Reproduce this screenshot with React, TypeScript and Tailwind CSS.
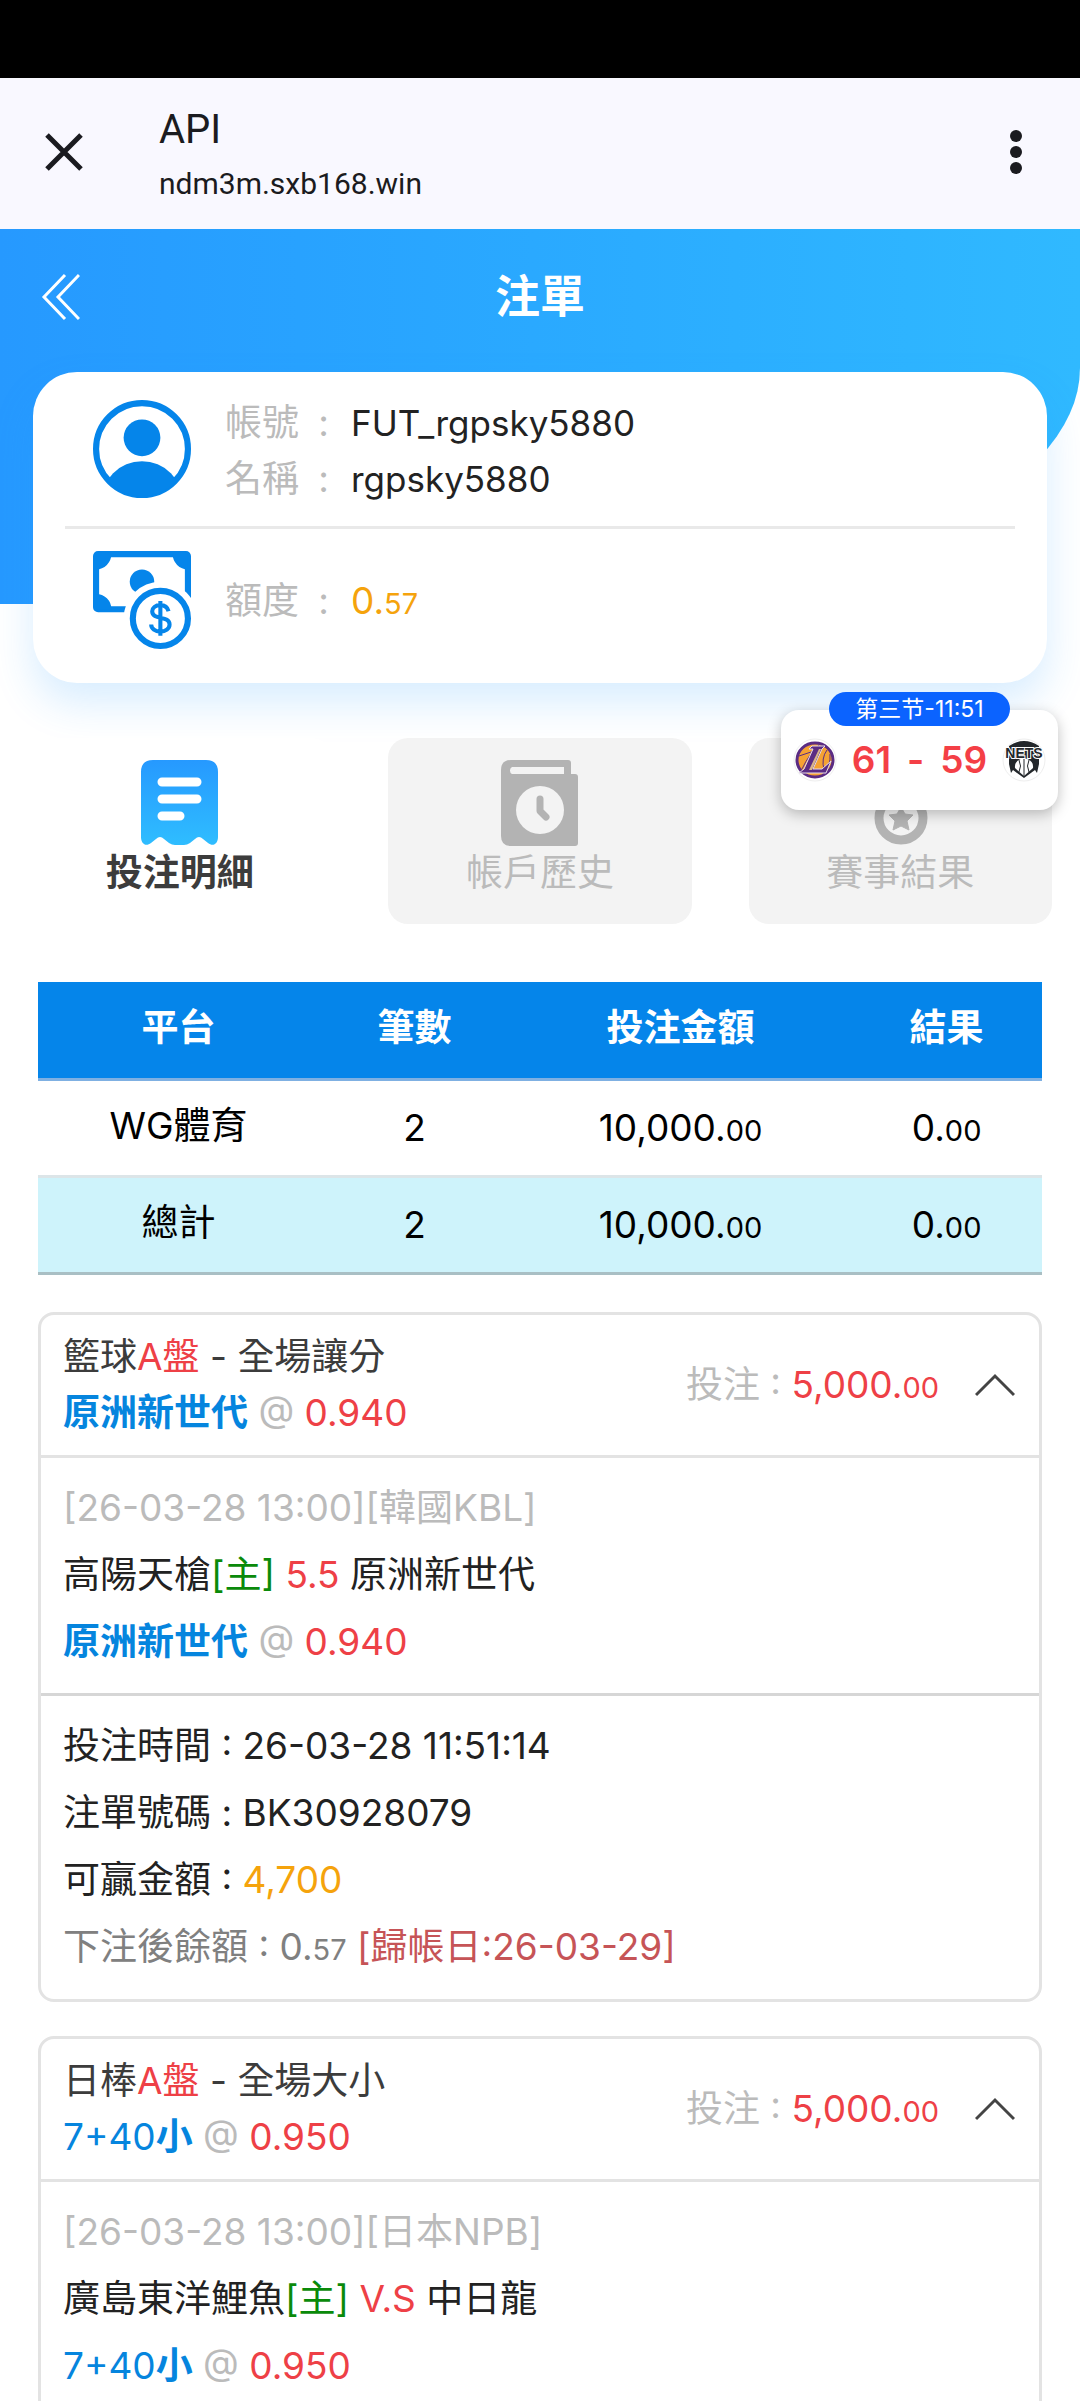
import { useState } from 'react'

interface Receipt {
    placedAt: string
    ticket: string
    toWin: string
    balance: string
    settleDate: string
}

interface Bet {
    id: string
    sport: string
    market: string
    pick: React.ReactNode
    odds: string
    stake: string
    league: string
    home: string
    line: string
    away: string
    receipt?: Receipt
}

const bets: Bet[] = [
    {
        id: 'kbl',
        sport: '籃球',
        market: '全場讓分',
        pick: <b>原洲新世代</b>,
        odds: '0.940',
        stake: '5,000.00',
        league: '[26-03-28 13:00][韓國KBL]',
        home: '高陽天槍',
        line: '5.5',
        away: '原洲新世代',
        receipt: {
            placedAt: '26-03-28 11:51:14',
            ticket: 'BK30928079',
            toWin: '4,700',
            balance: '0.57',
            settleDate: '26-03-29',
        },
    },
    {
        id: 'npb',
        sport: '日棒',
        market: '全場大小',
        pick: <>7+40<b>小</b></>,
        odds: '0.950',
        stake: '5,000.00',
        league: '[26-03-28 13:00][日本NPB]',
        home: '廣島東洋鯉魚',
        line: 'V.S',
        away: '中日龍',
    },
]

const summary = [
    { name: 'WG體育', count: '2', total: false },
    { name: '總計', count: '2', total: true },
]

// Decimals are set smaller than the integer part
function Amount({ value }: { value: string }) {
    const [whole, cents] = value.split('.')
    return (
        <span>
            {whole}.<span className="text-[29px]">{cents}</span>
        </span>
    )
}

function UserIcon() {
    return (
        <svg className="size-[98px] shrink-0" viewBox="0 0 96 96" aria-hidden="true">
            <defs>
                <clipPath id="userClip">
                    <circle cx="48" cy="48" r="46" />
                </clipPath>
            </defs>
            <circle cx="48" cy="48" r="45" fill="none" stroke="#0585ea" strokeWidth="6" />
            <circle cx="48" cy="37" r="18" fill="#0585ea" />
            <circle cx="48" cy="100" r="40" fill="#0585ea" clipPath="url(#userClip)" />
        </svg>
    )
}

function MoneyIcon() {
    return (
        <svg className="size-[98px] shrink-0" viewBox="0 0 96 96" aria-hidden="true">
            <rect x="3" y="3" width="90" height="54" rx="2" fill="#fff" stroke="#0585ea" strokeWidth="6" />
            <g fill="#0585ea">
                <path d="M3 3h15A15 15 0 0 1 3 18zM93 3v15A15 15 0 0 1 78 3zM3 57V42a15 15 0 0 1 15 15z" />
                <circle cx="48" cy="30" r="12" />
            </g>
            <circle cx="66" cy="66" r="36" fill="#fff" />
            <circle cx="66" cy="66" r="27" fill="#fff" stroke="#0585ea" strokeWidth="6" />
            <path
                d="M74 59c-1-4-4-6-8-6-5 0-8 3-8 6 0 9 17 4 17 13 0 4-4 7-9 7s-9-3-9-7M66 49v34"
                fill="none"
                stroke="#0585ea"
                strokeWidth="4"
            />
        </svg>
    )
}

function ReceiptIcon() {
    return (
        <svg className="h-[86px] w-[77px]" viewBox="0 0 77 86" aria-hidden="true">
            <defs>
                <linearGradient id="receiptFill" x1="0" y1="0" x2="0" y2="1">
                    <stop offset="0" stopColor="#2699ff" />
                    <stop offset="1" stopColor="#2fbdff" />
                </linearGradient>
            </defs>
            <path
                d="M12 0h53q12 0 12 12v65c0 7-5 10-10 6l-5-4q-4-4-8 0l-5 4q-3 2-6 2h-9q-3 0-6-2l-5-4q-4-4-8 0l-5 4C5 87 0 84 0 77V12Q0 0 12 0z"
                fill="url(#receiptFill)"
            />
            <path d="M21 22h35M21 39h35M21 56h18" stroke="#fff" strokeWidth="9" strokeLinecap="round" />
        </svg>
    )
}

function HistoryIcon() {
    return (
        <svg className="h-[86px] w-[77px]" viewBox="0 0 77 86" aria-hidden="true">
            <path
                fill="#b3b3b3"
                fillRule="evenodd"
                d="M10 0h57q3 0 3 3v11h4q3 0 3 3v66q0 3-3 3H10Q0 86 0 76V10Q0 0 10 0zm1 7a4 4 0 0 0 0 7h52V7z"
            />
            <circle cx="39" cy="50" r="24" fill="#f3f3f3" />
            <path d="M39 39v12l6 6" fill="none" stroke="#b3b3b3" strokeWidth="7" strokeLinecap="round" strokeLinejoin="round" />
        </svg>
    )
}

function ResultIcon() {
    return (
        <svg className="h-[86px] w-[77px]" viewBox="0 0 77 86" aria-hidden="true">
            <path d="M14 0h16l9 26 9-26h16L50 40H28z" fill="#b3b3b3" />
            <circle cx="39" cy="58" r="22" fill="#f3f3f3" stroke="#b3b3b3" strokeWidth="9" />
            <path d="M39 47l4 7 8 1-6 6 2 9-8-4-8 4 2-9-6-6 8-1z" fill="#b3b3b3" stroke="#b3b3b3" strokeLinejoin="round" />
        </svg>
    )
}

function LakersLogo() {
    return (
        <svg className="size-11" viewBox="0 0 44 44" role="img" aria-label="Lakers">
            <circle cx="22" cy="22" r="21" fill="#fff" stroke="#eee" />
            <ellipse cx="22" cy="22" rx="18" ry="17" fill="#f5a233" stroke="#5b2c83" strokeWidth="3" />
            <path d="M6 18q14-4 26-10M9 31Q16 16 27 6M30 36q8-8 7-20M34 12q-6 8-3 20" fill="none" stroke="#5b2c83" />
            <path d="M19 8h13l-3 3-9 20h9l9-8-5 12H6l5-4 9-20h-4z" fill="#5b2c83" stroke="#e5dbea" />
            <path d="M26 11h2l-9 21h-3z" fill="#d7b48c" />
        </svg>
    )
}

function NetsLogo() {
    return (
        <svg className="size-11" viewBox="0 0 44 44" role="img" aria-label="NETS">
            <circle cx="22" cy="22" r="21" fill="#fff" stroke="#eee" />
            <path d="M7 8q15-10 30 0v18l-2 9-2-3-11 8-11-8-2 3-2-9z" fill="#23272b" />
            <path d="M22 20q10 2 9 10l-9 8-9-8q-1-8 9-10z" fill="#fff" />
            <path d="M22 20v18M17 22q3 6 0 12M27 22q-3 6 0 12" fill="none" stroke="#23272b" />
            <text
                x="22"
                y="20"
                textAnchor="middle"
                fontSize="14"
                fontWeight="700"
                fill="#23272b"
                stroke="#fff"
                strokeWidth="2"
                paintOrder="stroke"
                fontFamily="Liberation Sans, sans-serif"
            >
                NETS
            </text>
        </svg>
    )
}

function PickLine({ bet }: { bet: Bet }) {
    return (
        <p>
            <span className="text-[#0585de]">{bet.pick}</span> <span className="text-[#bbb]">@</span>{' '}
            <span className="text-[#ee4046]">{bet.odds}</span>
        </p>
    )
}

function BetCard({ bet }: { bet: Bet }) {
    const [open, setOpen] = useState(true)

    return (
        <article className="rounded-2xl border-3 border-[#e3e3e3]">
            <div className="flex items-center justify-between py-[14px] pr-6 pl-[22px]">
                <div className="leading-[56px]">
                    <h2 className="text-[#3c3c3c]">
                        {bet.sport}
                        <span className="text-[#ee4046]">A盤</span> - {bet.market}
                    </h2>
                    <PickLine bet={bet} />
                </div>
                <div className="flex items-center gap-9">
                    <p>
                        <span className="text-[#bbb]">投注 : </span>
                        <span className="text-[#ee4046]">
                            <Amount value={bet.stake} />
                        </span>
                    </p>
                    <button type="button" aria-label="展開" aria-expanded={open} onClick={() => setOpen(!open)}>
                        <svg className={open ? 'h-6 w-10' : 'h-6 w-10 rotate-180'} viewBox="0 0 40 24" fill="none">
                            <path d="M1 22L20 3l19 19" stroke="#444" strokeWidth="3" />
                        </svg>
                    </button>
                </div>
            </div>
            {open && (
                <div className="border-t-3 border-[#e3e3e3] px-[22px] pt-4 pb-[18px] leading-[67px]">
                    <p className="text-[#bbb]">{bet.league}</p>
                    <p>
                        {bet.home}
                        <span className="text-[#0a8a0a]">[主]</span> <span className="text-[#ee4046]">{bet.line}</span>{' '}
                        {bet.away}
                    </p>
                    <PickLine bet={bet} />
                </div>
            )}
            {open && bet.receipt && (
                <div className="border-t-3 border-[#d6d6d6] px-[22px] py-4 leading-[67px]">
                    <p>投注時間 : {bet.receipt.placedAt}</p>
                    <p>注單號碼 : {bet.receipt.ticket}</p>
                    <p>
                        可贏金額 : <span className="text-[#f5a30c]">{bet.receipt.toWin}</span>
                    </p>
                    <p className="text-[#808080]">
                        下注後餘額 : <Amount value={bet.receipt.balance} />{' '}
                        <span className="text-[#c65457]">[歸帳日:{bet.receipt.settleDate}]</span>
                    </p>
                </div>
            )}
        </article>
    )
}

export default function App() {
    return (
        <div className="min-h-screen bg-white font-['Inter','Noto_Sans_CJK_TC',sans-serif] text-[37px] text-[#222]">
            <div className="h-[78px] bg-black" />

            {/* Browser bar */}
            <div className="flex h-[151px] items-center bg-[#f9f8ff] px-10 pb-1 font-[Roboto,sans-serif] text-[#1b1b20]">
                <button type="button" aria-label="關閉" className="mr-[75px] ml-1">
                    <svg className="size-10" viewBox="0 0 40 40" fill="none">
                        <path d="M3 3l34 34M37 3L3 37" stroke="#1b1b20" strokeWidth="5" />
                    </svg>
                </button>
                <div className="flex-1 pt-2">
                    <p className="text-[40px] leading-[56px]">API</p>
                    <p className="text-[30px] leading-[52px]">ndm3m.sxb168.win</p>
                </div>
                <button type="button" aria-label="選單" className="mr-4">
                    <svg className="h-12 w-4" viewBox="0 0 16 48" fill="#1b1b20">
                        <circle cx="8" cy="8" r="6" />
                        <circle cx="8" cy="24" r="6" />
                        <circle cx="8" cy="40" r="6" />
                    </svg>
                </button>
            </div>

            {/* Blue header, the account card hangs below it */}
            <header className="h-[375px] rounded-br-[50%_236px] bg-linear-to-r from-[#2699ff] to-[#30b9ff]">
                <div className="grid h-[143px] grid-cols-[1fr_auto_1fr] items-center px-10 pb-2">
                    <a href="#back" aria-label="返回">
                        <svg className="h-12 w-10" viewBox="0 0 40 48" fill="none">
                            <path d="M25 2L4 24l21 22M39 2L18 24l21 22" stroke="#fff" strokeWidth="3" />
                        </svg>
                    </a>
                    <h1 className="text-[45px] font-bold text-white">注單</h1>
                </div>
                <section className="mx-[33px] h-[311px] rounded-[44px] bg-white px-8 shadow-[0_20px_40px_rgba(38,153,255,0.18)]">
                    <div className="flex h-[157px] items-center gap-[34px] border-b-3 border-[#e9e9e9] pl-7">
                        <UserIcon />
                        <dl className="grid grid-cols-[104px_auto] gap-x-[22px] pt-1 leading-[56px]">
                            <dt className="flex justify-between text-[#bbb]">帳號<span>:</span></dt>
                            <dd className="text-[35px]">FUT_rgpsky5880</dd>
                            <dt className="flex justify-between text-[#bbb]">名稱<span>:</span></dt>
                            <dd className="text-[35px]">rgpsky5880</dd>
                        </dl>
                    </div>
                    <div className="flex h-[142px] items-center gap-[34px] pl-7">
                        <MoneyIcon />
                        <dl className="grid grid-cols-[104px_auto] gap-x-[22px] pt-1 leading-[56px]">
                            <dt className="flex justify-between text-[#bbb]">額度<span>:</span></dt>
                            <dd className="text-[#f5a30c]"><Amount value="0.57" /></dd>
                        </dl>
                    </div>
                </section>
            </header>

            {/* Tabs */}
            <div className="relative mt-[134px]">
                <nav className="grid grid-cols-3 gap-[57px] px-7">
                    <button type="button" className="flex h-[186px] flex-col items-center rounded-[20px] bg-white pt-[22px] font-bold text-[#3c3c3c]">
                        <ReceiptIcon />
                        <span className="leading-[54px]">投注明細</span>
                    </button>
                    <button type="button" className="flex h-[186px] flex-col items-center rounded-[20px] bg-[#f3f3f3] pt-[22px] text-[#bbb]">
                        <HistoryIcon />
                        <span className="leading-[54px]">帳戶歷史</span>
                    </button>
                    <button type="button" className="flex h-[186px] flex-col items-center rounded-[20px] bg-[#f3f3f3] pt-[22px] text-[#bbb]">
                        <ResultIcon />
                        <span className="leading-[54px]">賽事結果</span>
                    </button>
                </nav>

                {/* Floating live score */}
                <aside className="absolute -top-7 right-[22px] h-[100px] w-[277px] rounded-[18px] bg-white shadow-[0_4px_14px_rgba(0,0,0,0.25)]">
                    <p className="mx-auto -mt-[18px] w-[181px] rounded-full bg-[#0b63ff] text-center font-['Inter','Noto_Sans_CJK_SC',sans-serif] text-[23px] leading-[34px] text-white">
                        第三节-11:51
                    </p>
                    <div className="mt-3 flex items-center justify-between px-3">
                        <LakersLogo />
                        <span className="flex gap-4 text-[37px] leading-[44px] font-semibold text-[#f43f46]">
                            <span>61</span>
                            <span>-</span>
                            <span>59</span>
                        </span>
                        <NetsLogo />
                    </div>
                </aside>
            </div>

            <main className="px-[38px] pt-[58px]">
                <table className="w-full table-fixed text-center text-black">
                    <thead>
                        <tr className="h-[97px] border-b-3 border-[#7fb0e2] bg-[#0585ea] text-white">
                            <th className="w-[28%] p-0 pb-1">平台</th>
                            <th className="w-[19%] p-0 pb-1">筆數</th>
                            <th className="w-[34%] p-0 pb-1">投注金額</th>
                            <th className="w-[19%] p-0 pb-1">結果</th>
                        </tr>
                    </thead>
                    <tbody>
                        {summary.map((row) => (
                            <tr
                                key={row.name}
                                className={row.total ? 'h-[97px] border-b-3 border-[#a9bfc4] bg-[#cef3fb]' : 'h-[97px] border-b-3 border-[#dce5e8]'}
                            >
                                <td className="pb-1">{row.name}</td>
                                <td>{row.count}</td>
                                <td><Amount value="10,000.00" /></td>
                                <td><Amount value="0.00" /></td>
                            </tr>
                        ))}
                    </tbody>
                </table>

                <div className="mt-[37px] flex flex-col gap-[34px]">
                    {bets.map((bet) => (
                        <BetCard key={bet.id} bet={bet} />
                    ))}
                </div>
            </main>
        </div>
    )
}
